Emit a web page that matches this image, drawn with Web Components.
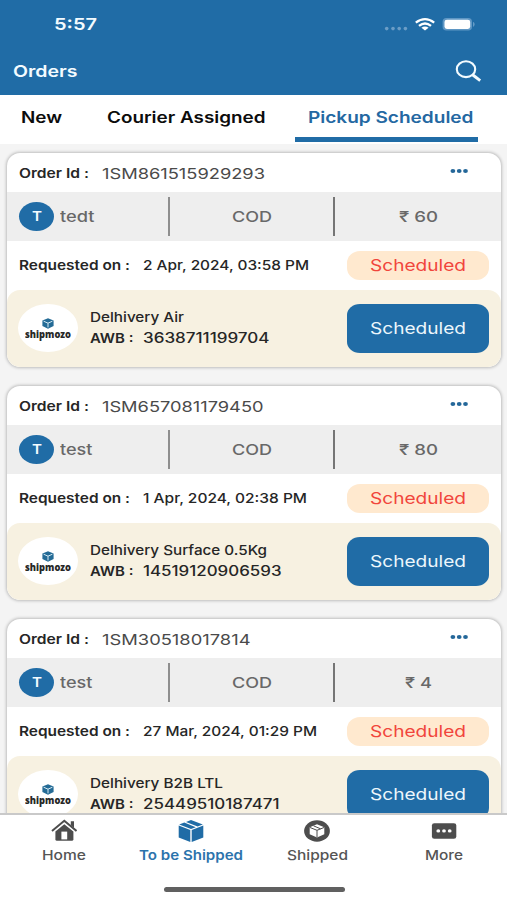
<!DOCTYPE html>
<html lang="en">
<head>
<meta charset="utf-8">
<title>Orders</title>
<style>
html,body{margin:0;height:900px;overflow:hidden}
body{font-family:Inter,"Liberation Sans",sans-serif;background:#f4f4f4}
</style>
</head>
<body>
<orders-app></orders-app>
<script>
// Text stretched horizontally to a given width.
customElements.define('fit-text', class extends HTMLElement {
  connectedCallback() {
    const root = this.attachShadow({mode: 'open'});
    root.innerHTML = `<style>
      :host{display:block;flex:none;white-space:nowrap;line-height:1.2}
      span{display:inline-block;vertical-align:top;transform-origin:0 50%}
    </style><span><slot></slot></span>`;
    const w = Number(this.getAttribute('w'));
    const span = root.querySelector('span');
    this.style.width = w + 'px';
    span.style.transform = `scaleX(${w / span.getBoundingClientRect().width})`;
  }
});

customElements.define('status-bar', class extends HTMLElement {
  connectedCallback() {
    this.attachShadow({mode: 'open'}).innerHTML = `<style>
      :host{display:flex;height:49px;box-sizing:border-box;padding:0 31px 0 54px;align-items:center;justify-content:space-between;color:#f3fbff;font-size:16.5px;font-weight:600}
      svg{display:block;margin-top:-2px}
    </style>
    <fit-text w="43">5:57</fit-text>
    <svg width="92" height="16" viewBox="384 16 92 16">
      <g fill="#6b9dc6"><circle cx="386.7" cy="28.6" r="1.8"/><circle cx="393" cy="28.6" r="1.8"/><circle cx="399.2" cy="28.6" r="1.8"/><circle cx="405.4" cy="28.6" r="1.8"/></g>
      <g fill="none" stroke="#fff" stroke-width="2.3">
        <path d="M415.8 22.6Q425 15.6 434.2 22.6"/><path d="M419 25.9Q425 21.1 431 25.9"/></g>
      <path d="M421.4 27.8Q425 25 428.6 27.8L425 30.6Z" fill="#fff"/>
      <rect x="442.6" y="18" width="29.4" height="12.6" rx="3.8" fill="#5f97c4"/>
      <rect x="444.5" y="19.7" width="25.7" height="9.2" rx="2.4" fill="#fff"/>
      <path d="M473.5 22.3Q475.3 24.3 473.5 26.4Z" fill="#73a5cc" stroke="#73a5cc" stroke-width=".6"/>
    </svg>`;
  }
});

customElements.define('title-bar', class extends HTMLElement {
  connectedCallback() {
    this.attachShadow({mode: 'open'}).innerHTML = `<style>
      :host{display:flex;height:46px;box-sizing:border-box;padding:0 24px 1px 13px;align-items:center;justify-content:space-between;color:#f3fbff;font-size:16px;font-weight:600}
      svg{display:block;margin-top:-2px}
    </style>
    <fit-text w="64.5"><slot></slot></fit-text>
    <svg width="28" height="24" viewBox="455 59 28 24" fill="none" stroke="#f3fbff">
      <ellipse cx="466" cy="69.2" rx="9.2" ry="7.9" stroke-width="2.1"/><path d="M472.6 74.8L480.2 80.6" stroke-width="3"/>
    </svg>`;
  }
});

customElements.define('tab-strip', class extends HTMLElement {
  connectedCallback() {
    this.attachShadow({mode: 'open'}).innerHTML = `<style>
      :host{display:flex;height:49px;box-sizing:border-box;padding-left:21px;background:#fff;color:#0c0c0c;font-size:15.8px;font-weight:600}
      .tab{display:flex;height:46.5px;box-sizing:border-box;padding-top:14px;flex:none}
      .one{width:85.5px}.two{width:188.5px}
      .on{width:182.5px;justify-content:center;color:#2468a2;padding-left:9px;border-bottom:5px solid #206ca6}
    </style>
    <div class="tab one"><fit-text w="41">New</fit-text></div>
    <div class="tab two"><fit-text w="158.5">Courier Assigned</fit-text></div>
    <div class="tab on"><fit-text w="165.5">Pickup Scheduled</fit-text></div>`;
  }
});

customElements.define('courier-logo', class extends HTMLElement {
  connectedCallback() {
    this.attachShadow({mode: 'open'}).innerHTML = `<style>
      :host{display:flex;flex-direction:column;align-items:center;width:60px;height:48px;box-sizing:border-box;padding-top:13.5px;border-radius:50%;background:#fff;color:#272727;font:800 9.6px "Open Sans",sans-serif}
      svg{display:block;flex:none}
      fit-text{margin-top:0}
    </style>
    <svg width="12" height="11" viewBox="0 0 12 11">
      <path d="M6 .2L11.6 2.6V8L6 10.8L.4 8V2.6Z" fill="#246b96"/>
      <path d="M1.6 3.2L6 5.2L10.4 3.2M6 5.2V9.4" fill="none" stroke="#d6eaf3" stroke-width="1"/>
    </svg>
    <fit-text w="46">shipmozo</fit-text>`;
  }
});

customElements.define('order-card', class extends HTMLElement {
  connectedCallback() {
    const a = n => this.getAttribute(n);
    this.attachShadow({mode: 'open'}).innerHTML = `<style>
      :host{display:block;flex:none;height:214px;border-radius:13px;background:#fff;overflow:hidden;box-shadow:0 0 3px 1px #bdbdbd;color:#262626}
      .row{display:flex;align-items:center;box-sizing:border-box}
      .head{height:39px;padding:2px 32px 0 12px}
      .head svg{display:block;margin:-6px 0 0 auto}
      .lab{font-size:13.3px;font-weight:600}
      .id{margin-left:12.5px;font-size:15px;color:#4a4a4a}
      .info{display:grid;grid-template-columns:162.5px 165px 1fr;height:48.5px;background:#eee;font-size:15px;font-weight:500;color:#686868;align-items:center}
      .info>div{display:flex;align-items:center;justify-content:center;height:39px;box-sizing:border-box}
      .info fit-text{margin-top:1px}
      .info .who{justify-content:flex-start;padding-left:12px;gap:6px}
      .who,.pay{border-right:2px solid #8e8e8e}.pay{border-color:#757575;padding-left:2px}
      .av{display:flex;align-items:center;justify-content:center;width:35px;height:29px;border-radius:50%;background:#206ca6;color:#f3fbff;font-size:13px;font-weight:600}
      .info .amt{padding-left:2px}
      .req{height:49px;padding:0 12px}
      .req>fit-text{margin-top:2px}
      .date{margin-left:13px;font-size:13.3px;font-weight:500}
      .pill{display:flex;align-items:center;justify-content:center;margin-left:auto;width:142px;height:29px;border-radius:13px/12px;background:#ffe9cf;color:#f1453c;font-size:16.3px;padding-top:1px;box-sizing:border-box}
      .ship{height:77.5px;padding:0 12px 0 11px;border-radius:13px;background:#f7f1e1;font-size:13.5px;font-weight:500}
      .lines{display:flex;flex-direction:column;gap:5px;margin:-1px 0 0 11.5px}
      .awb{display:flex;gap:10px;font-weight:600}.awb .num{font-weight:500;font-size:14px}
      .btn{display:flex;align-items:center;justify-content:center;margin-left:auto;width:142px;height:48.5px;border-radius:13px/11px;background:#206ca6;color:#edf7fc;font-size:16.3px;font-weight:400;padding-top:1px;box-sizing:border-box}
    </style>
    <div class="row head"><fit-text class="lab" w="70">Order Id :</fit-text><fit-text class="id" w="${a('oidw')}">${a('oid')}</fit-text>
      <svg width="20" height="6" viewBox="0 0 20 6" fill="#246799"><ellipse cx="3.9" cy="3" rx="2.4" ry="2.1"/><ellipse cx="10.2" cy="3" rx="2.4" ry="2.1"/><ellipse cx="16.5" cy="3" rx="2.4" ry="2.1"/></svg></div>
    <div class="info">
      <div class="who"><span class="av"><fit-text w="10">T</fit-text></span><fit-text w="${a('namew')}">${a('name')}</fit-text></div>
      <div class="pay"><fit-text w="40">COD</fit-text></div>
      <div class="amt"><fit-text w="${a('amtw')}">₹ ${a('amt')}</fit-text></div></div>
    <div class="row req"><fit-text class="lab" w="111">Requested on :</fit-text><fit-text class="date" w="${a('datew')}">${a('date')}</fit-text>
      <span class="pill"><fit-text w="96">Scheduled</fit-text></span></div>
    <div class="row ship"><courier-logo></courier-logo>
      <div class="lines"><fit-text w="${a('byw')}">${a('by')}</fit-text>
      <div class="awb"><fit-text w="43.5">AWB :</fit-text><fit-text class="num" w="${a('awbw')}">${a('awb')}</fit-text></div></div>
      <span class="btn"><fit-text w="96">Scheduled</fit-text></span></div>`;
  }
});

const NAV_ICONS = {
  home: `<path d="M13.3 5.2L22.4 12.4V20.2Q22.4 21.8 20.8 21.8H6Q4.4 21.8 4.4 20.2V12.4Z" fill="#4d4d4d"/><path d="M1 12L13.3 1.8L25.5 12" fill="none" stroke="#fff" stroke-width="3.6"/><path d="M1 12L13.3 1.8L25.5 12" fill="none" stroke="#4d4d4d" stroke-width="2"/><path d="M19.8 2.2H23V9L19.8 6.3Z" fill="#4d4d4d"/><rect x="10.4" y="12.6" width="5.8" height="7.8" fill="#fff"/>`,
  box: `<path d="M.7 6.6L12.3 11V23L.7 18.4ZM25.3 6.6L13.7 11V23L25.3 18.4Z" fill="#206ca6"/><path d="M1.2 5.5L6.3 3.6L17.8 8.3L13 10.1ZM8 2.9L13 .9L24.8 5.5L19.6 7.6Z" fill="#206ca6"/>`,
  shipped: `<ellipse cx="13" cy="12" rx="12.9" ry="10.7" fill="#4d4d4d"/><path d="M13 5.2L20.3 8.2V15.3L13 18.5L5.7 15.3V8.2Z" fill="#fff"/><path d="M6 8.5L13 11.3L20 8.5M13 11.3V18.2M9.5 6.8L16.5 9.8" fill="none" stroke="#4d4d4d" stroke-width="1"/>`,
  more: `<rect x=".9" y="4.2" width="24.4" height="15.6" rx="2.4" fill="#4d4d4d"/><g fill="#fff"><ellipse cx="7.3" cy="11.9" rx="1.9" ry="1.6"/><ellipse cx="13" cy="11.9" rx="1.9" ry="1.6"/><ellipse cx="18.7" cy="11.9" rx="1.9" ry="1.6"/></g>`
};
customElements.define('nav-item', class extends HTMLElement {
  connectedCallback() {
    this.attachShadow({mode: 'open'}).innerHTML = `<style>
      :host{display:flex;flex-direction:column;align-items:center;padding:4px 0 0 1px;gap:4px;color:#555;font-size:13.5px;font-weight:500}
      :host([active]){color:#2c73ac;font-weight:600}
      svg{display:block}
    </style><svg width="26" height="24" viewBox="0 0 26 24">${NAV_ICONS[this.getAttribute('icon')]}</svg>
    <fit-text w="${this.getAttribute('w')}"><slot></slot></fit-text>`;
  }
});

customElements.define('bottom-nav', class extends HTMLElement {
  connectedCallback() {
    this.attachShadow({mode: 'open'}).innerHTML = `<style>
      :host{display:flex;flex-direction:column;height:87px;box-sizing:border-box;border-top:2px solid #c9c9c9;background:#fff;flex:none}
      nav{display:grid;grid-template-columns:repeat(4,1fr);height:72px}
      i{width:181px;height:4.6px;border-radius:3px;background:#606060;margin-left:163.5px}
    </style><nav>
      <nav-item icon="home" w="44">Home</nav-item>
      <nav-item icon="box" w="104" active>To be Shipped</nav-item>
      <nav-item icon="shipped" w="61">Shipped</nav-item>
      <nav-item icon="more" w="38">More</nav-item></nav><i></i>`;
  }
});

customElements.define('orders-app', class extends HTMLElement {
  connectedCallback() {
    this.attachShadow({mode: 'open'}).innerHTML = `<style>
      :host{display:flex;flex-direction:column;width:507px;height:900px;background:#f4f4f4}
      header{background:#206ca6;flex:none}
      tab-strip{flex:none}
      main{display:flex;flex-direction:column;gap:19px;flex:1;min-height:0;overflow:hidden;padding:9px 6px 0 7px;box-sizing:border-box}
    </style>
    <header><status-bar></status-bar><title-bar>Orders</title-bar></header>
    <tab-strip></tab-strip>
    <main>
      <order-card oid="1SM861515929293" oidw="163" name="tedt" namew="34.5" amt="60" amtw="39" date="2 Apr, 2024, 03:58 PM" datew="166" by="Delhivery Air" byw="94" awb="3638711199704" awbw="126.5"></order-card>
      <order-card oid="1SM657081179450" oidw="161.5" name="test" namew="32.5" amt="80" amtw="39" date="1 Apr, 2024, 02:38 PM" datew="164" by="Delhivery Surface 0.5Kg" byw="177" awb="14519120906593" awbw="138.5"></order-card>
      <order-card oid="1SM30518017814" oidw="148.5" name="test" namew="32.5" amt="4" amtw="27" date="27 Mar, 2024, 01:29 PM" datew="174" by="Delhivery B2B LTL" byw="133" awb="25449510187471" awbw="136.5"></order-card>
    </main>
    <bottom-nav></bottom-nav>`;
  }
});
</script>
</body>
</html>
